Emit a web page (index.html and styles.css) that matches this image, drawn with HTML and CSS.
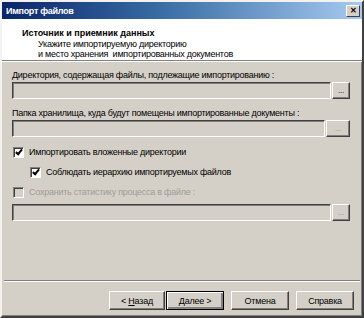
FILE: index.html
```html
<!DOCTYPE html>
<html lang="ru">
<head>
    <meta charset="UTF-8">
    <title>Импорт файлов</title>
    <link rel="stylesheet" href="styles.css">
</head>
<body>
    <div class="window">
        <div class="titlebar">
            <span class="title">Импорт файлов</span>
            <span class="close">&#x2715;</span>
        </div>

        <div class="header">
            <div class="header-title">Источник и приемник данных</div>
            <div class="header-sub">Укажите импортируемую директорию<br>и место хранения&nbsp; импортированных документов</div>
        </div>

        <div class="content">
            <div class="label">Директория, содержащая файлы, подлежащие импортированию :</div>
            <div class="path-row">
                <div class="field"></div>
                <div class="browse">...</div>
            </div>

            <div class="label">Папка хранилища, куда будут помещены импортированные документы :</div>
            <div class="path-row">
                <div class="field"></div>
                <div class="browse wide disabled">...</div>
            </div>

            <div class="checks">
                <div class="check-row">
                    <span class="checkbox checked"></span>
                    <span>Импортировать вложенные директории</span>
                </div>
                <div class="check-row sub">
                    <span class="checkbox checked"></span>
                    <span>Соблюдать иерархию импортируемых файлов</span>
                </div>
                <div class="check-row disabled">
                    <span class="checkbox"></span>
                    <span>Сохранить статистику процесса в файле :</span>
                </div>
            </div>
            <div class="path-row">
                <div class="field"></div>
                <div class="browse disabled">...</div>
            </div>
        </div>

        <div class="footer">
            <div class="btn">&lt;&nbsp;<u>Н</u>азад</div>
            <div class="btn default"><u>Д</u>алее&nbsp;&gt;</div>
            <div class="btn">Отмена</div>
            <div class="btn">Справка</div>
        </div>
    </div>
</body>
</html>
```

FILE: styles.css
```css
* {
    box-sizing: border-box;
    margin: 0;
    padding: 0;
}

body {
    font-family: "Liberation Sans", Arial, sans-serif;
    font-size: 9px;
    letter-spacing: -0.25px;
    color: #000;
    background-color: #d4d0c8;
}

.window {
    width: 364px;
    height: 318px;
    display: flex;
    flex-direction: column;
    background-color: #d4d0c8;
    border: 2px solid;
    border-color: #f4f2ee #404040 #404040 #f4f2ee;
    box-shadow: inset -1px -1px 0 #808080;
}

.titlebar {
    height: 17px;
    display: flex;
    align-items: center;
    justify-content: space-between;
    padding: 0 2px 0 4px;
    background: linear-gradient(to right, #0a246a 0%, #3a6ea5 45%, #a6caf0 100%);
    color: #fff;
    font-weight: bold;
    letter-spacing: -0.3px;
}

.close {
    width: 14px;
    height: 12px;
    display: flex;
    align-items: center;
    justify-content: center;
    background-color: #d4d0c8;
    color: #000;
    font-size: 8px;
    font-weight: bold;
    border: 1px solid;
    border-color: #fff #404040 #404040 #fff;
}

.header {
    height: 42px;
    background-color: #fff;
    padding: 9px 0 0 20px;
    border-bottom: 1px solid #808080;
    box-shadow: 0 1px 0 #fff;
}

.header-title {
    font-weight: bold;
    letter-spacing: 0;
    line-height: 11px;
}

.header-sub {
    padding-left: 16px;
    line-height: 10px;
}

.content {
    flex: 1;
    padding: 8px 12px 0 10px;
}

.label {
    line-height: 12px;
    margin-bottom: 1px;
}

.path-row {
    display: flex;
    gap: 1px;
    margin-bottom: 8px;
}

.field {
    flex: 1;
    height: 17px;
    border: 1px solid;
    border-color: #404040 #fff #fff #404040;
    box-shadow: inset 1px 1px 0 #808080;
}

.browse {
    width: 18px;
    height: 17px;
    display: flex;
    align-items: center;
    justify-content: center;
    font-size: 8px;
    border: 1px solid;
    border-color: #fff #404040 #404040 #fff;
    box-shadow: inset -1px -1px 0 #808080;
}

.browse.wide {
    width: 24px;
}

.browse.disabled {
    color: #8e8a84;
}

.checks {
    margin: -3px 0 2px;
}

.check-row {
    display: flex;
    align-items: center;
    gap: 5px;
    height: 20px;
    padding-left: 1px;
}

.check-row.sub {
    padding-left: 18px;
}

.check-row.disabled {
    color: #a09c96;
}

.checkbox {
    width: 11px;
    height: 11px;
    background-color: #fff;
    border: 1px solid;
    border-color: #808080 #fff #fff #808080;
    box-shadow: inset 1px 1px 0 #404040;
    position: relative;
}

.check-row.disabled .checkbox {
    background-color: #d4d0c8;
}

.checkbox.checked::after {
    content: "";
    position: absolute;
    left: 3px;
    top: 0;
    width: 2px;
    height: 5px;
    border: solid #000;
    border-width: 0 2px 2px 0;
    transform: rotate(40deg);
}

.footer {
    height: 36px;
    margin: 0 2px;
    border-top: 1px solid #808080;
    box-shadow: inset 0 1px 0 #fff;
    display: flex;
    justify-content: flex-end;
    align-items: flex-start;
    gap: 7px;
    padding-top: 10px;
    padding-right: 6px;
}

.btn {
    width: 58px;
    height: 19px;
    display: flex;
    align-items: center;
    justify-content: center;
    border: 1px solid;
    border-color: #fff #404040 #404040 #fff;
    box-shadow: inset -1px -1px 0 #808080;
}

.btn:first-child {
    width: 56px;
    margin-right: -6px;
}

.btn.default {
    border-color: #000;
    box-shadow: inset 1px 1px 0 #fff, inset -2px -2px 0 #808080;
}
```
